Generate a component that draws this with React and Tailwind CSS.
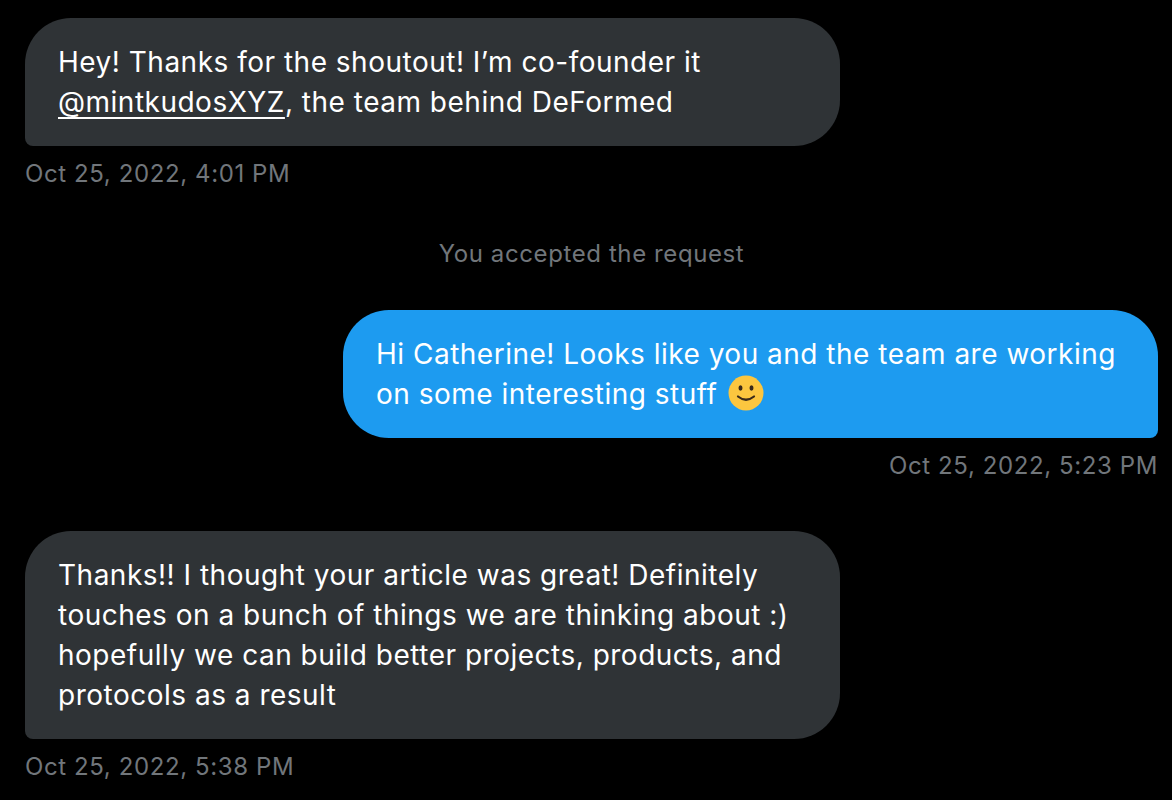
import React from 'react';

const font = { fontFamily: 'Inter, "Noto Sans", sans-serif' };

function Smile() {
  return (
    <svg width="36" height="36" viewBox="0 0 36 36" className="inline-block align-[-7px] ml-[2px]">
      <circle cx="18" cy="18" r="17.5" fill="#fcc63f" />
      <ellipse cx="12.5" cy="13" rx="2" ry="2.7" fill="#3b2a1a" />
      <ellipse cx="23.5" cy="13" rx="2" ry="2.7" fill="#3b2a1a" />
      <path d="M10 21.5 Q18 28 26 21.5" stroke="#3b2a1a" strokeWidth="2.2" fill="none" strokeLinecap="round" />
    </svg>
  );
}

function Received({ children }) {
  return (
    <div className="w-[815px] bg-[#2f3336] text-white rounded-[46px] rounded-bl-[8px] px-[33px] py-[24px] text-[28px] leading-[40px] tracking-[0.5px]">
      {children}
    </div>
  );
}

function Sent({ children }) {
  return (
    <div className="w-[815px] bg-[#1d9bf0] text-white rounded-[46px] rounded-br-[8px] px-[33px] py-[24px] text-[28px] leading-[40px] tracking-[0.5px]">
      {children}
    </div>
  );
}

function Stamp({ children, right }) {
  return (
    <div className={`mt-[13px] text-[24px] leading-[30px] tracking-[0.6px] text-[#71767b] ${right ? 'self-end' : ''}`}>
      {children}
    </div>
  );
}

export default function App() {
  return (
    <div className="min-h-[800px] bg-black pt-[18px] pl-[25px] pr-[14px]" style={font}>
      <div className="flex flex-col">
        <Received>
          Hey! Thanks for the shoutout! I’m co-founder it
          <br />
          <span className="underline underline-offset-[5px] decoration-[2px]">@mintkudosXYZ</span>, the team behind DeFormed
        </Received>
        <Stamp>Oct 25, 2022, 4:01 PM</Stamp>

        <div className="mt-[50px] text-center text-[24px] leading-[30px] tracking-[0.6px] text-[#71767b]">
          You accepted the request
        </div>

        <div className="mt-[41px] self-end">
          <Sent>
            Hi Catherine! Looks like you and the team are working
            <br />
            on some interesting stuff <Smile />
          </Sent>
        </div>
        <Stamp right>Oct 25, 2022, 5:23 PM</Stamp>

        <div className="mt-[50px]">
          <Received>
            Thanks!! I thought your article was great! Definitely
            <br />
            touches on a bunch of things we are thinking about :)
            <br />
            hopefully we can build better projects, products, and
            <br />
            protocols as a result
          </Received>
        </div>
        <Stamp>Oct 25, 2022, 5:38 PM</Stamp>
      </div>
    </div>
  );
}
